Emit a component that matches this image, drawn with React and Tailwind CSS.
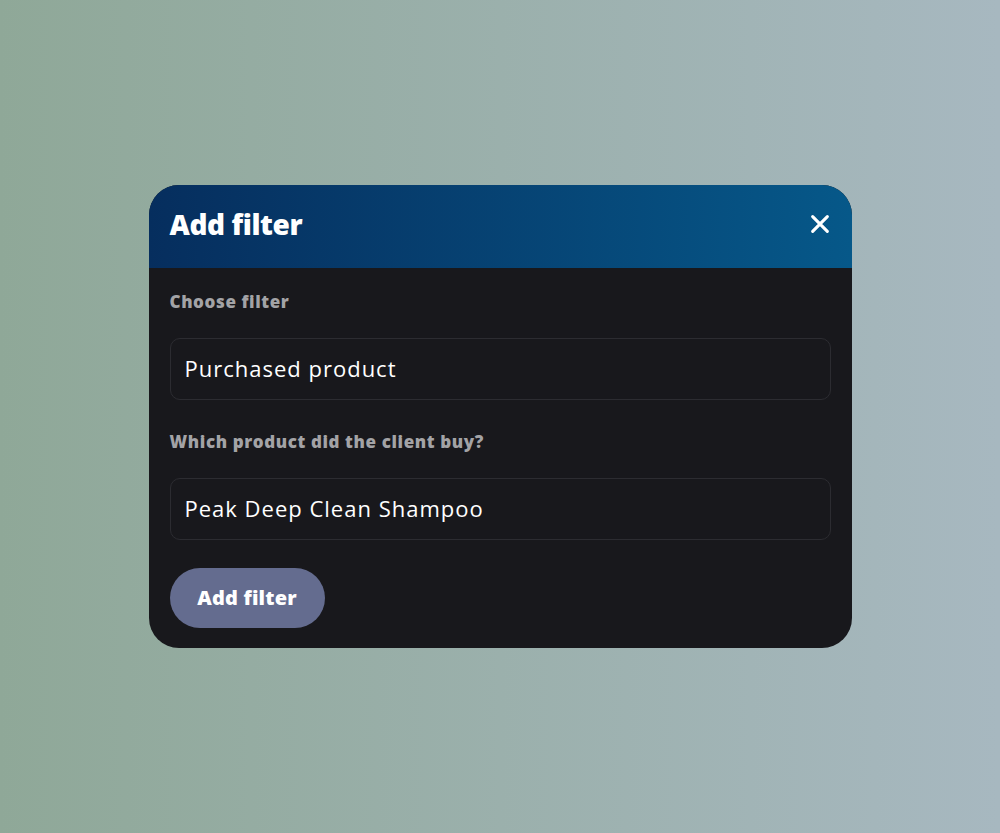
import React from "react";

export default function App() {
  return (
    <div
      className="w-full h-[833px] flex items-center justify-center bg-gradient-to-r from-[#8fa898] to-[#a7b8c0]"
      style={{ fontFamily: '"Open Sans", "Liberation Sans", sans-serif' }}
    >
      <div className="w-[703px] rounded-[30px] overflow-hidden bg-[#18181c]">
        <div className="h-[83px] flex items-center justify-between pl-[21px] pr-[21px] pb-[5px] bg-gradient-to-r from-[#062e5e] to-[#065889]">
          <h1 className="text-[28px] font-extrabold text-white tracking-[-0.4px]">Add filter</h1>
          <svg width="22" height="22" viewBox="0 0 24 24" fill="none" stroke="white" strokeWidth="3.4" strokeLinecap="round">
            <path d="M4 4L20 20M20 4L4 20" />
          </svg>
        </div>
        <div className="px-[21px] pt-[22px] pb-[20px] flex flex-col">
          <label className="text-[17px] font-extrabold text-[#a3a3a6] leading-[24px] tracking-[0.6px]">Choose filter</label>
          <div className="mt-[24px] h-[62px] rounded-[10px] border border-[#2c2c31] flex items-center px-[14px] text-[22px] tracking-[1px] text-white">
            <span className="-mt-[2px]">Purchased product</span>
          </div>
          <label className="mt-[30px] text-[17px] font-extrabold text-[#a3a3a6] leading-[24px] tracking-[0.6px]">Which product did the client buy?</label>
          <div className="mt-[24px] h-[62px] rounded-[10px] border border-[#2c2c31] flex items-center px-[14px] text-[22px] tracking-[1px] text-white">
            <span className="-mt-[2px]">Peak Deep Clean Shampoo</span>
          </div>
          <button className="mt-[28px] w-[155px] h-[60px] rounded-full bg-[#646c8f] text-white text-[20px] font-extrabold tracking-[0.2px]">
            Add filter
          </button>
        </div>
      </div>
    </div>
  );
}
